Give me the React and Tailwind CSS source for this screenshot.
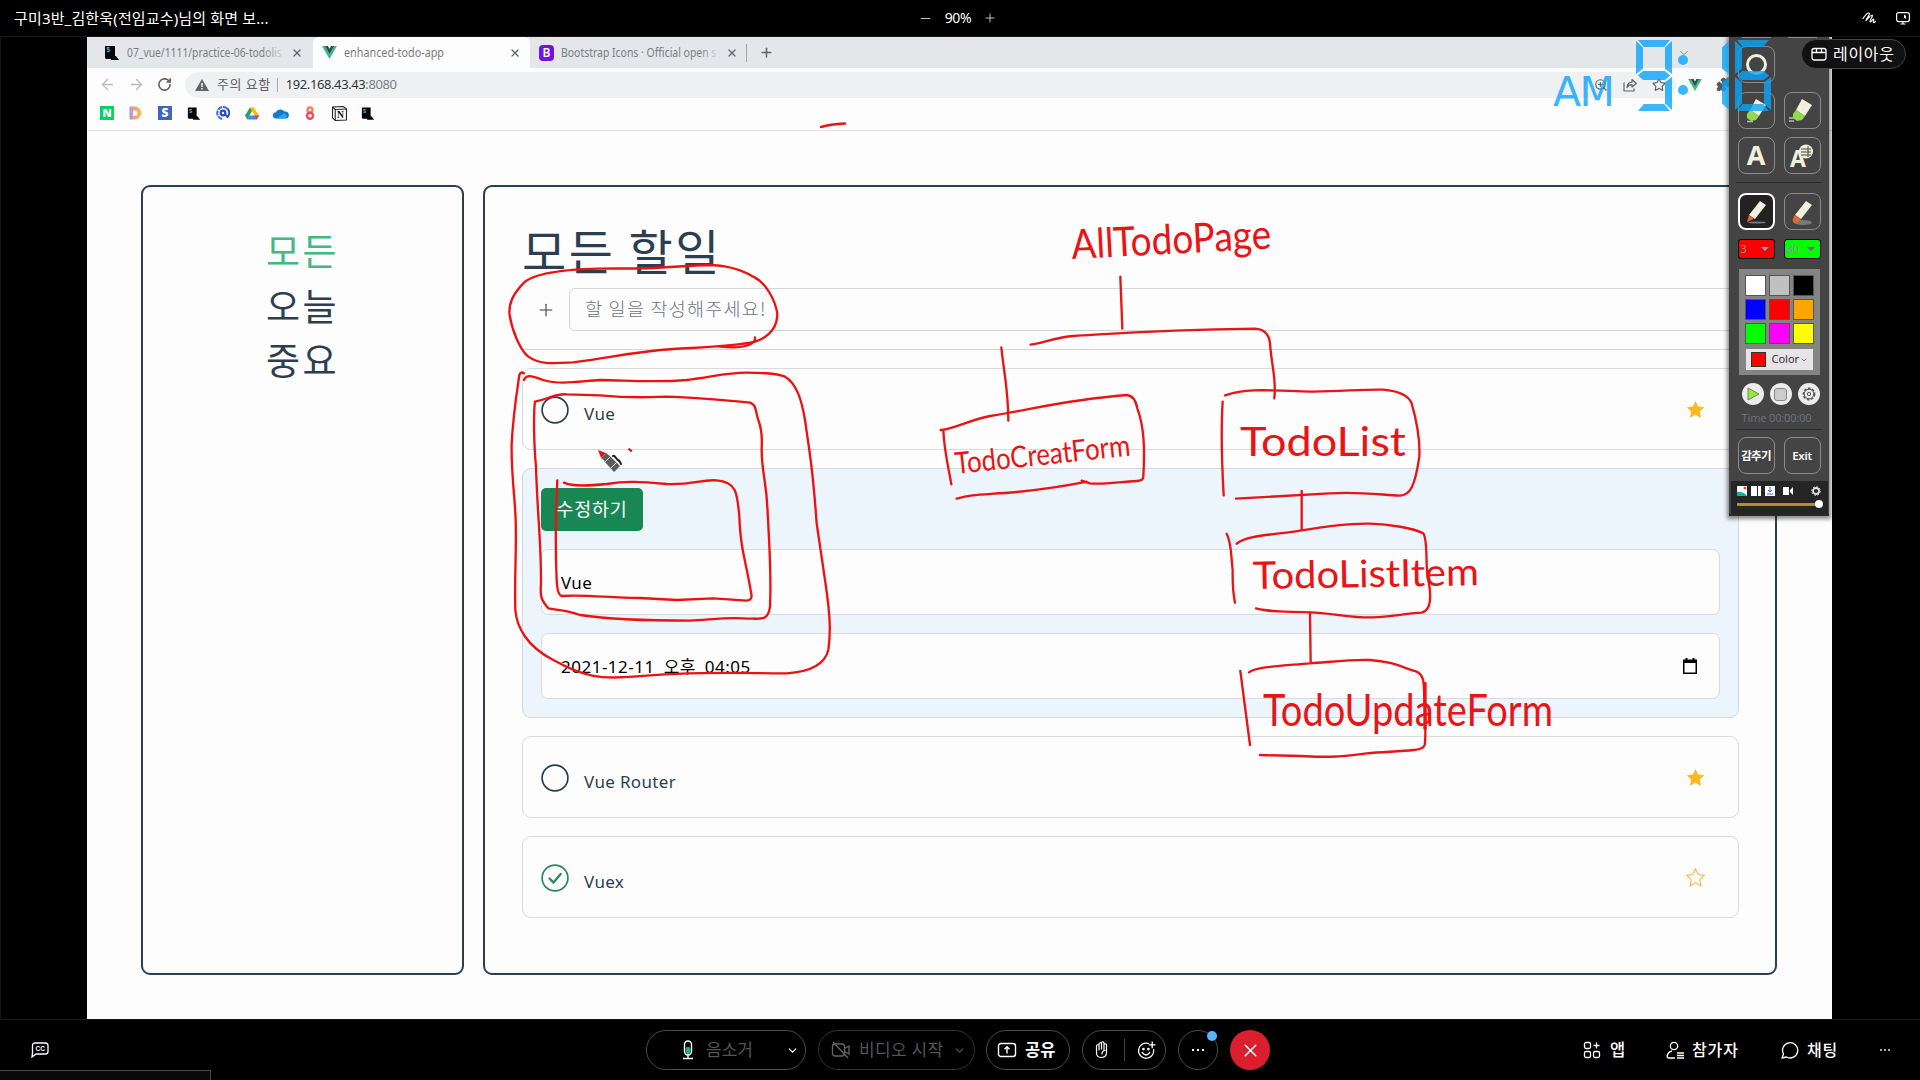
import React from "react";
import {
  ArrowLeft, ArrowRight, RotateCw, X, Plus, Minus, ChevronDown, Star, ZoomIn, Puzzle,
} from "lucide-react";

const KR = "font-['Noto_Sans','Noto_Sans_CJK_KR',sans-serif]";

function VueLogo({ className }) {
  return (
    <svg viewBox="0 0 24 21" className={className}>
      <path d="M0 0h9.2L12 4.8 14.8 0H24L12 20.8z" fill="#41b883" />
      <path d="M4.8 0h4.4L12 4.8 14.8 0h4.4L12 12.4z" fill="#34495e" />
    </svg>
  );
}

function Terminal({ className }) {
  return (
    <svg viewBox="0 0 16 16" className={className}>
      <path d="M1 1h10v10h1l3 4H7v-1H2l-1-1z" fill="#050505" />
      <text x="2.4" y="7.4" fontSize="6.5" fontWeight="700" fill="#4fb3c8" fontFamily="Liberation Sans">$</text>
    </svg>
  );
}

function TopBar() {
  return (
    <header className="flex h-9 items-center bg-black text-white">
      <div className="w-[911px] pl-[14px] text-[15px] leading-none tracking-[0.15px]">구미3반_김한욱(전임교수)님의 화면 보...</div>
      <div className="flex flex-1 items-center">
        <div className="flex w-[100px] items-center justify-between pl-[7px] pr-[14px]">
          <Minus size={15} strokeWidth={1.5} className="text-gray-300" />
          <span className="text-[14px] leading-none tracking-[-0.4px]">90%</span>
          <Plus size={14} strokeWidth={1.5} className="text-gray-300" />
        </div>
      </div>
      <div className="flex items-center gap-[18px] pr-[9px]">
        <svg viewBox="0 0 16 14" className="h-[14px] w-4" fill="none" stroke="#fff" strokeWidth="1.2" strokeLinecap="round" strokeLinejoin="round">
          <path d="M2 7.500C4 4.500 7 1.500 8.200 2.200S5.500 7.500 5 9.500C7 7.500 10 3.500 11.200 4.300S8.500 9 9 10.500 11.500 8 12.500 8.200 11.500 11 12.500 11.500 13.800 11 14.300 10.500" />
        </svg>
        <svg viewBox="0 0 16 14" className="h-[14px] w-4" fill="none" stroke="#fff" strokeWidth="1.2">
          <rect x="1.600" y="1.600" width="12.800" height="9" rx="2" />
          <path d="M5.500 13h5M8 11v2" />
          <path d="M9 3.500 11 5v3L9 6.500z" fill="#fff" stroke="none" />
        </svg>
      </div>
    </header>
  );
}

function Tabs() {
  return (
    <div className="flex h-[31px] items-center bg-[#e5e6ea] text-[12px] text-[#7a7c80]">
      <div className="flex w-[226px] items-center pl-[17px]">
        <Terminal className="h-4 w-4" />
        <div className="relative ml-[7px] w-[160px] whitespace-nowrap">
          <span className="inline-block origin-left scale-x-[0.86]">07_vue/1111/practice-06-todolis</span>
          <div className="absolute inset-y-0 right-0 w-6 bg-gradient-to-r from-transparent to-[#e5e6ea]" />
        </div>
        <X size={12} strokeWidth={2.6} className="ml-[4px] text-[#5f6368]" />
      </div>
      <div className="flex h-full w-[217px] items-center rounded-t-md bg-[#fdfdfd] pl-[9px]">
        <VueLogo className="h-[13px] w-[15px]" />
        <div className="ml-[7px] w-[164px]"><span className="inline-block origin-left scale-x-[0.9]">enhanced-todo-app</span></div>
        <X size={12} strokeWidth={2.6} className="ml-[1px] text-[#5f6368]" />
      </div>
      <div className="flex w-[217px] items-center border-r border-[#a0a2a6] pl-[9px]">
        <div className="flex h-4 w-[15px] items-center justify-center rounded-sm bg-[#7012e8] text-[12px] font-semibold text-white">B</div>
        <div className="relative ml-[7px] w-[159px] whitespace-nowrap">
          <span className="inline-block origin-left scale-x-[0.87]">Bootstrap Icons · Official open s</span>
          <div className="absolute inset-y-0 right-0 w-5 bg-gradient-to-r from-transparent to-[#e5e6ea]" />
        </div>
        <X size={12} strokeWidth={2.6} className="ml-[6px] text-[#5f6368]" />
      </div>
      <Plus size={15} strokeWidth={2.4} className="ml-[12px] text-[#5f6368]" />
      <ChevronDown size={14} strokeWidth={1.5} className="ml-[903px] text-[#777]" />
    </div>
  );
}

function AddressBar() {
  return (
    <div className="flex h-[33px] items-center pl-[12px] text-[#5f6368]">
      <ArrowLeft size={17} strokeWidth={1.8} className="text-[#b8babd]" />
      <ArrowRight size={17} strokeWidth={1.8} className="ml-[12px] text-[#b8babd]" />
      <RotateCw size={15} strokeWidth={2.6} className="ml-[12px]" />
      <div className="ml-[13px] flex h-[26px] w-[1491px] items-center rounded-full bg-[#eff0f2] pl-[10px]">
        <svg viewBox="0 0 14 12" className="h-[12px] w-[14px]">
          <path d="M7 0l7 12H0z" fill="#5f6368" /><path d="M6.300 4h1.400v4H6.300zM6.300 9h1.400v1.400H6.300z" fill="#fff" />
        </svg>
        <span className="ml-[8px] text-[13px] leading-none tracking-[0.5px]">주의 요함</span>
        <div className="ml-[6px] h-[14px] w-px bg-[#a5a7aa]" />
        <span className="ml-[8px] text-[13px] leading-none tracking-[-0.4px] text-[#333639]">192.168.43.43<span className="text-[#7b7d80]">:8080</span></span>
        <div className="ml-auto flex items-center gap-[15px] pr-[10px]">
          <ZoomIn size={14} />
          <svg viewBox="0 0 14 14" className="h-[14px] w-[14px]" fill="none" stroke="currentColor" strokeWidth="1.200" strokeLinejoin="round">
            <path d="M1 4.500V13h10v-2.500M4 9.500C4.300 6.500 6 4.300 9 4.200V1.500L13.300 5.500 9 9V6.700C6.800 6.700 5.200 7.500 4 9.500z" />
          </svg>
          <Star size={14} />
        </div>
      </div>
      <VueLogo className="ml-[12px] h-[12px] w-[14px]" />
      <Puzzle size={15} fill="#555" className="ml-[14px]" />
    </div>
  );
}

function Bookmarks() {
  return (
    <div className="flex h-[30px] items-center gap-[15px] border-b border-[#dfe0e2] pb-[5px] pl-[13px]">
      <div className="flex h-[14px] w-[14px] items-center justify-center bg-[#04d45f] text-[11px] font-black text-white">N</div>
      <svg viewBox="0 0 14 14" className="-ml-px h-[14px] w-[14px]">
        <defs><linearGradient id="dg"><stop offset="0" stopColor="#a69ae0" /><stop offset=".5" stopColor="#f0a486" /><stop offset="1" stopColor="#f5c63c" /></linearGradient></defs>
        <path d="M1.500 .500H7a6.300 6.300 0 0 1 0 13H1.500zM5 4.500v5.500h1.500a2.700 2.700 0 0 0 0-5.500z" fill="url(#dg)" fillRule="evenodd" />
      </svg>
      <div className="ml-px flex h-[14px] w-[14px] items-center justify-center bg-[#3f66b8] text-[12px] font-black text-white">S</div>
      <Terminal className="h-[15px] w-[14px]" />
      <svg viewBox="0 0 14 14" className="h-[14px] w-[14px]" fill="none" strokeWidth="2">
        <path d="M11.500 2.800A6 6 0 1 0 7 13" stroke="#3c6ae0" strokeDasharray="5 .8" /><circle cx="7" cy="7" r="2.300" stroke="#2b46d8" strokeWidth="2.200" /><path d="M11.500 2.800A6 6 0 0 1 11.500 11L9.500 8.500" stroke="#2b46d8" />
      </svg>
      <svg viewBox="0 0 14 13" className="h-[13px] w-[14px]">
        <path d="M5 .500h4l5 8h-4.500z" fill="#fbbc05" /><path d="M5 .500 0 8.500 2.200 12.500 7 4z" fill="#1fa463" /><path d="M4.500 8.500H14L11.800 12.500H2.200z" fill="#4285f4" /><path d="M9.500 8.500H14l-2.200 4z" fill="#ea4335" />
      </svg>
      <svg viewBox="0 0 16 11" className="-mx-px h-[11px] w-4">
        <path d="M3 10.500A3 3 0 0 1 3 4.300 5 5 0 0 1 11.600 3.600 3.400 3.400 0 0 1 13 10.500z" fill="#1279ce" /><path d="M3 10.500 11 5.500A3 3 0 0 1 13 10.500z" fill="#29a5ea" />
      </svg>
      <svg viewBox="0 0 14 14" className="h-[14px] w-[14px]" fill="none" strokeWidth="2.400">
        <circle cx="7" cy="4" r="2.500" stroke="#fa8064" /><circle cx="7" cy="9.700" r="3" stroke="#f4485c" />
      </svg>
      <svg viewBox="0 0 14 14" className="h-[15px] w-[15px]">
        <path d="M.500 1 10.500.500 13.500 2.500V13L3 13.500.500 11z" fill="#fff" stroke="#222" /><path d="M.500 1 3 3.200 13.500 2.800M3 3.200v10" stroke="#222" fill="none" />
        <text x="4.600" y="11.600" fontSize="9" fontWeight="700" fontFamily="Liberation Serif" fill="#111">N</text>
      </svg>
      <Terminal className="-ml-px h-[15px] w-[14px]" />
    </div>
  );
}

function TodoItem({ title, checked, starred, className }) {
  return (
    <div className={`flex h-[82px] items-center rounded-[9px] border border-[#d8dadd] bg-[#fdfdfd] pl-[18px] pr-[33px] ${className}`}>
      <svg viewBox="0 0 28 28" className="mt-px h-7 w-7" fill="none">
        <circle cx="14" cy="14" r="12.900" stroke={checked ? "#2b8a5c" : "#2c3e50"} strokeWidth="1.700" />
        {checked && <path d="M8.500 14.500l4 4 7.200-8.500" stroke="#2b8a5c" strokeWidth="2.300" strokeLinecap="round" />}
      </svg>
      <span className="ml-[15px] pt-[9px] text-[17px] tracking-[0.35px] text-[#2c3e50]">{title}</span>
      <svg viewBox="0 0 16 16" className="ml-auto mt-px h-[19px] w-[19px]" fill={starred ? "#fbb91f" : "none"} stroke={starred ? "none" : "#f7bb4c"}>
        <path d="M8 .8l2.250 4.700 5.150.7-3.750 3.600.9 5.200L8 12.500 3.450 15l.9-5.200L.6 6.200l5.150-.7z" strokeWidth="1" />
      </svg>
    </div>
  );
}

function TodoApp() {
  return (
    <main className="flex h-[888px] gap-[19px] bg-[#fdfdfd] pl-[54px] pt-[54px] text-[#2c3e50]">
      <nav className="flex h-[790px] w-[323px] flex-col items-center rounded-[9px] border-2 border-[#2c3e50] pt-[36px] text-[37px] leading-[54.500px] font-['Noto_Sans_CJK_KR',sans-serif] font-normal tracking-[2.500px]">
        <span className="text-[#42b983]">모든</span>
        <span>오늘</span>
        <span>중요</span>
      </nav>
      <section className="h-[790px] w-[1294px] rounded-[9px] border-2 border-[#2c3e50] pl-[37px] pr-[36px]">
        <h1 className="mt-[31px] h-[65px] font-['Noto_Sans_CJK_KR',sans-serif] text-[48px] font-normal leading-[62px] tracking-[2.500px]">모든 할일</h1>
        <form className="flex h-[67px] items-start border-b border-[#d3d6d9] pl-[13px] pt-[5px]">
          <div className="flex h-[43px] w-[34px] items-center pl-px"><Plus size={20} strokeWidth={1.3} /></div>
          <div className="flex h-[43px] flex-1 items-center rounded-md border border-[#d3d6d9] pb-[2px] pl-[15px] font-['Noto_Sans_CJK_KR',sans-serif] text-[18.500px] font-light tracking-[1.250px] text-[#6c757d]">할 일을 작성해주세요!</div>
        </form>
        <TodoItem title="Vue" starred className="mt-[18px]" />
        <div className="mt-[18px] h-[250px] rounded-[9px] border border-[#d3d6da] bg-[#ecf4fc] px-[18px] pt-[19px] text-[18px] text-black">
          <div className="flex h-[43px] w-[102px] items-center justify-center rounded-[5px] bg-[#198754] pb-px text-[18.500px] tracking-[0.800px] text-white">수정하기</div>
          <div className="mt-[18px] flex h-[66px] items-center rounded-[7px] border border-[#d8dbdf] bg-[#fdfdfd] pl-[19px] pt-px text-[17px] tracking-[0.300px]">Vue</div>
          <div className="mt-[18px] flex h-[66px] items-center justify-between rounded-[7px] border border-[#d8dbdf] bg-[#fdfdfd] pl-[19px] pr-[21px] text-[17px]">
            <span className="pt-px tracking-[0.500px] [word-spacing:4px]">2021-12-11 오후 04:05</span>
            <svg viewBox="0 0 16 16" className="h-4 w-4"><path d="M3.500 0h2v1.500h5V0h2v1.500H15V16H1V1.500h2.500zM2.500 5v9.500h11V5z" fillRule="evenodd" /></svg>
          </div>
        </div>
        <TodoItem title="Vue Router" starred className="mt-[18px]" />
        <TodoItem title="Vuex" checked className="mt-[18px]" />
      </section>
    </main>
  );
}

function Ink() {
  return (
    <svg viewBox="0 0 1920 1080" className="pointer-events-none absolute left-0 top-0 h-[1080px] w-[1920px]" fill="none" stroke="#e81416" strokeLinecap="round" strokeLinejoin="round">
      <path d="M821 127C828 125 837 124 845 123.500" strokeWidth="2.400" />
      <g transform="translate(500 180) scale(.33333)" strokeWidth="7" stroke="#ee1111">
        <path d="M765 472C768 494 730 508 660 500M765 485C810 470 832 440 832 400C825 360 800 310 760 290C700 255 640 255 610 255C500 262 430 268 350 265C250 265 120 270 75 305C35 345 28 370 28 400C35 450 60 510 85 530C120 555 160 550 220 547C350 530 400 515 520 507C600 502 700 500 765 485" />
        <path d="M72 600C80 580 100 590 130 600C180 615 230 605 300 600C400 602 470 608 560 600C640 590 680 578 740 578C800 578 830 580 855 590C890 610 905 660 915 720L928 810C938 880 945 960 950 1030L975 1200C995 1330 990 1370 985 1410C975 1450 940 1475 860 1480C800 1482 600 1470 400 1490C300 1498 250 1490 160 1440C80 1400 50 1340 46 1290C43 1200 50 1100 47 1020C45 950 33 880 35 790C40 700 50 640 58 585Q63 573 72 580" />
        <path d="M105 665C150 655 170 640 200 643L300 646C400 655 430 652 500 650C580 652 650 658 750 668C770 675 765 690 775 720C790 760 785 790 785 810C785 880 800 900 803 1000C806 1060 815 1180 810 1280C805 1325 780 1315 740 1316C700 1310 640 1318 570 1322C450 1322 340 1320 240 1305C200 1290 170 1290 145 1285C115 1250 123 1240 123 1200C123 1080 112 1000 108 860C102 800 100 700 105 665" />
        <path transform="translate(0 780)" d="M172 121C168 200 166 330 170 420Q172 465 185 468C250 462 340 475 420 474L530 480L640 475L740 482Q758 480 754 462C735 350 722 330 718 230C712 160 710 125 650 121C600 118 580 135 500 132C420 125 380 122 320 132C280 136 220 142 192 128M388 28L393 32" />
      </g>
      <g transform="translate(930 200) scale(.33333)" strokeWidth="7">
        <path d="M571 230L577 386M302 434C340 430 380 410 430 408C600 398 700 390 975 386Q1015 388 1020 430C1025 500 1040 540 1033 595M214 442C222 520 235 570 235 662" />
        <path d="M32 690C60 690 120 660 180 648C300 630 400 600 590 585Q615 587 622 625C642 680 645 740 640 830Q640 842 620 843C570 845 520 855 480 850L455 842M470 845C400 860 300 872 260 876C150 885 130 882 80 896M40 690C42 750 55 800 64 853" />
        <path d="M885 586C950 565 1000 570 1150 575C1250 573 1300 568 1360 569Q1430 575 1445 610C1465 680 1470 730 1468 770C1455 860 1440 885 1410 887C1330 882 1280 875 1200 880C1100 885 1000 892 918 896M878 605C872 700 875 780 881 886" />
      </g>
      <g transform="translate(1200 480) scale(.33333)" strokeWidth="7">
        <path d="M305 33V150M110 191C140 165 220 165 300 152C400 135 470 130 510 131C570 132 640 145 670 160C685 180 675 270 685 300C695 350 695 390 665 398C600 402 550 415 490 412C420 410 390 398 330 397C250 395 200 395 168 385M80 161C95 190 92 220 98 270Q97 330 105 368" />
        <path d="M330 397L332 549M147 577C170 560 240 558 330 550C400 545 460 538 510 540C580 545 600 560 650 575C680 590 668 620 676 700C675 740 678 770 674 795Q670 808 640 810C600 815 550 815 500 820C400 835 350 830 300 828L180 825M121 573L150 795" />
        <path d="M675 610V745" strokeWidth="10" />
      </g>
      <g fill="#e81416" stroke="none" fontFamily="Lato, sans-serif" fontWeight="400">
        <text x="1072" y="259" fontSize="41" textLength="200" lengthAdjust="spacingAndGlyphs" transform="rotate(-3 1072 259)">AllTodoPage</text>
        <text x="956" y="474" fontSize="30" textLength="176" lengthAdjust="spacingAndGlyphs" transform="rotate(-6 956 474)">TodoCreatForm</text>
        <text x="1240" y="456" fontSize="40" textLength="166" lengthAdjust="spacingAndGlyphs">TodoList</text>
        <text x="1253" y="589" fontSize="38" textLength="226" lengthAdjust="spacingAndGlyphs" transform="rotate(-1 1253 589)">TodoListItem</text>
        <text x="1263" y="726" fontSize="44" textLength="290" lengthAdjust="spacingAndGlyphs">TodoUpdateForm</text>
      </g>
      <g transform="translate(598 450)" stroke="none">
        <path d="M0 0 8 3 3 8z" fill="#e31517" />
        <path d="M8 3 12 6 7 11 3 8zM12 6 22 16 16 22 6 11z" fill="#5c5c5c" />
        <path d="M12 7 7 12M18 13 13 18" stroke="#fff" />
        <path d="M15 6C17 5 18 9 20 10S22 12 23 14" stroke="#222" strokeWidth="2" fill="none" />
      </g>
    </svg>
  );
}

function ToolButton({ active, children, className = "" }) {
  return (
    <div className={`flex h-[37px] w-[37px] items-center justify-center rounded-[8px] border ${active ? "border-2 border-white bg-[#222]" : "border-[#8b8b8b]"} ${className}`}>{children}</div>
  );
}

function Highlighter({ lines }) {
  return (
    <svg viewBox="0 0 28 28" className="h-7 w-7">
      <path d="M14 3 24 9 17 20 8 14z" fill="#f2f0dc" /><path d="M8 14 17 20 14 24 9 25 5 22 5 18z" fill="#93d94c" />
      <path d={lines ? "M1 22h5M1 25h5" : "M5 25.500h6"} stroke="#bbb" strokeWidth="1.500" />
    </svg>
  );
}

function Pencil({ wide }) {
  return (
    <svg viewBox="0 0 28 28" className="h-7 w-7">
      <ellipse cx="15" cy="24.500" rx="9" ry={wide ? 2.500 : 1} fill="#777" />
      <path d="M18 3 24 7 13 21 7 17z" fill="#f2f0dc" />
      <path d={wide ? "M7 17 13 21Q11 25 6 25 3 22 7 17z" : "M7 17 12 21 5 24z"} fill="#dc6b38" />
    </svg>
  );
}

function PenToolbox() {
  return (
    <aside className="absolute left-[1729px] top-[37px] flex h-[479px] w-[100px] flex-col items-center border-b-2 border-[#2a2a2a] bg-[#444] font-['Noto_Sans','Noto_Sans_CJK_KR',sans-serif] shadow-[0_1px_4px_2px_rgba(0,0,0,0.45)]">
      <div className="flex gap-[17px]">
        <div className="h-px w-[29px] bg-[#8b8b8b]" />
        <div className="h-px w-[29px] bg-[#8b8b8b]" />
      </div>
      <div className="mt-[8px] grid grid-cols-2 gap-x-[9px] gap-y-[8.500px]">
        <ToolButton><div className="h-[21px] w-[21px] rounded-full border-[3px] border-[#f2f0dc]" /></ToolButton>
        <div />
        <ToolButton><Highlighter /></ToolButton>
        <ToolButton><Highlighter lines /></ToolButton>
        <ToolButton><span className="text-[27px] font-bold text-[#f2f0dc]">A</span></ToolButton>
        <ToolButton>
          <svg viewBox="0 0 28 28" className="h-7 w-7">
            <text x="2" y="25" fontSize="23" fontWeight="700" fill="#f2f0dc" fontFamily="Noto Sans">A</text>
            <circle cx="18" cy="9.500" r="7" fill="#f2f0dc" />
            <path d="M13 7h10M13 10h10M13 13h10M20 4v11" stroke="#444" />
          </svg>
        </ToolButton>
      </div>
      <div className="mt-[8px] h-px w-[86px] bg-[#2b2b2b]" />
      <div className="mt-[10px] flex gap-[9px]">
        <ToolButton active><Pencil /></ToolButton>
        <ToolButton><Pencil wide /></ToolButton>
      </div>
      <div className="mt-[9px] flex gap-[9px] text-[11px] text-[#9b8f8f]">
        <div className="flex h-[20px] w-[37px] items-center justify-between rounded-[3px] border border-black bg-[#f00] pl-[2px] pr-[5px]">3<div className="border-x-4 border-t-4 border-x-transparent border-t-[#5ab8c8]" /></div>
        <div className="flex h-[20px] w-[37px] items-center justify-between rounded-[3px] border border-black bg-[#0f0] pl-[2px] pr-[5px]">30<div className="border-x-4 border-t-4 border-x-transparent border-t-[#a63fb8]" /></div>
      </div>
      <div className="mt-[10px] flex h-[106px] w-[81px] shrink-0 flex-col items-center bg-[#848484] pt-[6px]">
        <div className="grid grid-cols-3 gap-[3px]">
          <div className="h-[21px] w-[21px] border border-[#555] bg-white" />
          <div className="h-[21px] w-[21px] border border-[#555] bg-[#c0c0c0]" />
          <div className="h-[21px] w-[21px] border border-[#555] bg-black" />
          <div className="h-[21px] w-[21px] border border-[#555] bg-[#00f]" />
          <div className="h-[21px] w-[21px] border border-[#555] bg-[#f00]" />
          <div className="h-[21px] w-[21px] border border-[#555] bg-[#ffa500]" />
          <div className="h-[21px] w-[21px] border border-[#555] bg-[#0f0]" />
          <div className="h-[21px] w-[21px] border border-[#555] bg-[#f0f]" />
          <div className="h-[21px] w-[21px] border border-[#555] bg-[#ff0]" />
        </div>
        <div className="mt-[5px] flex h-[21px] w-[67px] items-center bg-[#e6e4e6] pl-[5px] text-[11px] text-[#333]">
          <div className="mr-[6px] h-[15px] w-[15px] border border-[#333] bg-[#f00]" />Color<ChevronDown size={8} className="ml-[1px]" />
        </div>
      </div>
      <div className="mt-[8px] flex gap-[6px] pl-[3px]">
        <div className="flex h-[22px] w-[22px] items-center justify-center rounded-full bg-[#ececec]"><svg viewBox="0 0 14 14" className="h-[14px] w-[14px]"><path d="M2 1 13 7 2 13z" fill="#98e645" stroke="#6b8b50" /></svg></div>
        <div className="flex h-[22px] w-[22px] items-center justify-center rounded-full bg-[#ececec]"><div className="h-[13px] w-[13px] rounded-[3px] border border-[#888] bg-[#ccc]" /></div>
        <div className="flex h-[22px] w-[22px] items-center justify-center rounded-full bg-[#ececec]"><svg viewBox="0 0 14 14" className="h-[14px] w-[14px]" fill="none" stroke="#555"><circle cx="7" cy="7" r="5.600" strokeWidth="1.600" strokeDasharray="2.600 1.500" /><circle cx="7" cy="7" r="4.800" /><circle cx="7" cy="7" r="1.700" /></svg></div>
      </div>
      <div className="mt-[4px] pr-[5px] text-[11px] leading-[17px] tracking-[-0.150px] text-[#68727c]">Time 00:00:00</div>
      <div className="mt-[3px] h-px w-[86px] bg-[#2b2b2b]" />
      <div className="mt-[7px] flex gap-[9px] text-[11.500px] font-semibold text-white">
        <ToolButton className="tracking-[-0.700px]">감추기</ToolButton><ToolButton className="tracking-[-0.300px]">Exit</ToolButton>
      </div>
      <div className="mt-auto flex h-[33px] w-[97px] flex-col bg-[#252525] px-[6px] pt-[5px]">
        <div className="flex items-center gap-[3px]">
          <svg viewBox="0 0 10 10" className="h-[10px] w-[10px]"><path d="M0 0h10v10H0z" fill="#fff" /><path d="M0 6Q6 5 10 10H0z" fill="#19b09a" /><circle cx="8" cy="2" r="1.500" fill="#e84b30" /></svg>
          <svg viewBox="0 0 10 10" className="ml-[1px] h-[10px] w-[10px]"><path d="M0 0h6v10H0zM7 0h3v10H7z" fill="#fff" /></svg>
          <svg viewBox="0 0 10 10" className="ml-[1px] h-[10px] w-[10px]"><path d="M0 0h10v10H0z" fill="#fff" /><path d="M5 1v5M3 4l2 2 2-2M2 8h6" stroke="#3268d8" fill="none" /></svg>
          <svg viewBox="0 0 10 8" className="ml-[5px] h-[8px] w-[10px]"><path d="M0 0h6v8H0zM7 3l3-3v8L7 5z" fill="#fff" /></svg>
          <svg viewBox="0 0 10 10" className="ml-auto mr-[1px] h-[10px] w-[10px]" fill="none" stroke="#ddd"><circle cx="5" cy="5" r="3" strokeWidth="1.800" /><circle cx="5" cy="5" r="4.300" strokeDasharray="1.800 1.500" /></svg>
        </div>
        <div className="mt-[4px] flex items-center"><div className="h-[3px] flex-1 border-b border-[#7fa03c] bg-[#c08a2a]" /><div className="-mr-px h-[8px] w-[8px] rounded-full bg-white" /></div>
      </div>
    </aside>
  );
}

const SEGMENTS = {
  top: "left-[2px] top-0 h-[7px] w-[32px] [clip-path:polygon(0_0,100%_0,82%_100%,18%_100%)]",
  upperLeft: "left-0 top-[1px] h-[33px] w-[7px] [clip-path:polygon(0_0,100%_20%,100%_84%,0_100%)]",
  upperRight: "left-[29px] top-[1px] h-[33px] w-[7px] [clip-path:polygon(100%_0,0_20%,0_84%,100%_100%)]",
  middle: "left-[2px] top-[31px] h-[9px] w-[32px] [clip-path:polygon(0_50%,16%_0,84%_0,100%_50%,84%_100%,16%_100%)]",
  lowerLeft: "left-0 top-[37px] h-[33px] w-[7px] [clip-path:polygon(0_0,100%_16%,100%_80%,0_100%)]",
  lowerRight: "left-[29px] top-[37px] h-[33px] w-[7px] [clip-path:polygon(100%_0,0_16%,0_80%,100%_100%)]",
  bottom: "left-[2px] top-[64px] h-[7px] w-[32px] [clip-path:polygon(18%_0,82%_0,100%_100%,0_100%)]",
};

function Digit({ on, className = "" }) {
  return (
    <div className={`relative h-[71px] w-[36px] ${className}`}>
      {on.map((name) => <div key={name} className={`absolute bg-[#0aa5fb] ${SEGMENTS[name]}`} />)}
    </div>
  );
}

function Clock() {
  return (
    <div className="absolute left-[1553px] top-[40px] flex h-[71px] items-start opacity-80">
      <span className="mt-[26px] w-[83px] text-[41px] leading-[52px] text-[#0aa5fb] font-['DejaVu_Sans',sans-serif] font-normal tracking-[-1.500px]">AM</span>
      <Digit on={["top", "upperLeft", "upperRight", "middle", "lowerRight", "bottom"]} />
      <div className="ml-[6px] mt-[15px] flex flex-col gap-[20px]">
        <div className="h-[10px] w-[10px] rounded-full bg-[#0aa5fb]" /><div className="h-[10px] w-[10px] rounded-full bg-[#0aa5fb]" />
      </div>
      <Digit on={["upperRight", "lowerRight"]} className="ml-[5px]" />
      <Digit on={["top", "upperLeft", "middle", "lowerLeft", "lowerRight", "bottom"]} className="ml-[6px]" />
    </div>
  );
}

const pill = "flex h-10 items-center rounded-full border border-[#4a4a4a]";

function BottomBar() {
  return (
    <footer className="relative flex h-[61px] items-center border-t border-[#161616] bg-black text-[16px] text-white">
      <div className="w-[646px] pl-[31px]">
        <svg viewBox="0 0 18 16" className="h-4 w-[18px]">
          <path d="M3.500 1h11A2.500 2.500 0 0 1 17 3.500v6a2.500 2.500 0 0 1-2.500 2.500H5l-4 3 .5-4V3.500A2.500 2.500 0 0 1 3.500 1z" fill="none" stroke="#fff" strokeWidth="1.300" />
          <text x="9.200" y="9" fontSize="6.500" fill="#fff" textAnchor="middle" fontWeight="700" fontFamily="Liberation Sans">CC</text>
        </svg>
      </div>
      <div className={`${pill} w-[160px] pl-[35px] text-[#555]`}>
        <svg viewBox="0 0 12 20" className="h-5 w-3" fill="none" stroke="#fff" strokeWidth="1.400">
          <rect x="2.500" y="1" width="7" height="14" rx="3.500" /><rect x="3.500" y="7" width="5" height="7" rx="2" fill="#2ea58a" stroke="none" /><path d="M6 15v3M1 18.500h10" />
        </svg>
        <span className="ml-[12px] w-[80px] text-[17px]">음소거</span>
        <ChevronDown size={13} className="text-white" />
      </div>
      <div className={`${pill} ml-[12px] w-[157px] border-[#333] pl-[12px] text-[#555]`}>
        <svg viewBox="0 0 20 18" className="h-[18px] w-5" fill="none" stroke="#666" strokeWidth="1.300"><rect x="1.500" y="3" width="12" height="12" rx="2.500" /><path d="M13.500 7.500 18 5v8l-4.500-2.500M2 1l15 16" /></svg>
        <span className="ml-[8px] w-[94px] whitespace-nowrap text-[17px] tracking-[0.300px]">비디오 시작</span>
        <ChevronDown size={13} />
      </div>
      <div className={`${pill} ml-[11px] w-[84px] pl-[10px] font-semibold`}>
        <svg viewBox="0 0 20 16" className="h-4 w-5" fill="none" stroke="#fff" strokeWidth="1.400"><rect x="1.500" y="1.500" width="17" height="13" rx="2.500" /><path d="M10 11.500V5M7.500 7.300 10 4.800l2.500 2.500" /></svg>
        <span className="ml-[8px] text-[16.500px]">공유</span>
      </div>
      <div className={`${pill} ml-[12px] w-[84px] pl-[12px]`}>
        <svg viewBox="0 0 14 18" className="h-[18px] w-[14px]" fill="none" stroke="#fff" strokeWidth="1.200" strokeLinejoin="round" strokeLinecap="round">
          <path d="M1.500 12V5a1.200 1.200 0 0 1 2.500 0v4-6a1.200 1.200 0 0 1 2.500 0v5-6a1.200 1.200 0 0 1 2.500 0v7-5a1.200 1.200 0 0 1 2.500 0v7c0 4-2 5.500-5 5.500s-5-2-5-4.500M7 13c0-2 1-3.500 3-3.500" />
        </svg>
        <div className="ml-[15px] h-[22px] w-px bg-[#444]" />
        <svg viewBox="0 0 20 20" className="ml-[12px] h-[19px] w-[19px]" fill="none" stroke="#fff" strokeWidth="1.400" strokeLinecap="round">
          <path d="M12 2.600A8 8 0 1 0 17.500 9M16 1v6M13 4h6M5.500 12q4 5.500 8 0" /><circle cx="6.800" cy="8.500" r=".7" fill="#fff" /><circle cx="12" cy="8.500" r=".7" fill="#fff" />
        </svg>
      </div>
      <div className={`${pill} relative ml-[12px] w-10 justify-center gap-[3px]`}>
        <div className="h-[2px] w-[2px] bg-white" /><div className="h-[2px] w-[2px] bg-white" /><div className="h-[2px] w-[2px] bg-white" />
        <div className="absolute right-0 top-0 h-[10px] w-[10px] rounded-full bg-[#5eb1fb]" />
      </div>
      <div className="ml-[12px] flex h-10 w-10 items-center justify-center rounded-full bg-[#db1f2f]"><X size={21} strokeWidth={1.600} /></div>
      <div className="ml-[313px] flex items-center font-medium">
        <svg viewBox="0 0 18 18" className="h-[18px] w-[18px]" fill="none" stroke="#fff" strokeWidth="1.300"><rect x="1.500" y="1.500" width="6" height="6" rx="1.500" /><rect x="1.500" y="10.500" width="6" height="6" rx="1.500" /><rect x="10.500" y="10.500" width="6" height="6" rx="1.500" /><path d="M13.500 1.500v6M10.500 4.500h6" /></svg>
        <span className="ml-[9px] w-[56px] text-[16.500px]">앱</span>
        <svg viewBox="0 0 18 18" className="h-[18px] w-[18px]" fill="none" stroke="#fff" strokeWidth="1.300"><circle cx="8" cy="5" r="3.700" /><path d="M9 17H3q-2 0-1.800-2Q2 11 6 10M11 12h7M11 14.500h7M11 17h7" /></svg>
        <span className="ml-[8px] w-[89px] tracking-[0.900px]">참가자</span>
        <svg viewBox="0 0 18 18" className="h-[18px] w-[18px]" fill="none" stroke="#fff" strokeWidth="1.300"><path d="M1 17l1.500-4A7.600 7.600 0 1 1 5.500 16z" strokeLinejoin="round" /></svg>
        <span className="ml-[8px] w-[73px] tracking-[0.900px]">채팅</span>
        <div className="flex gap-[2px]"><div className="h-[2px] w-[2px] bg-[#aaa]" /><div className="h-[2px] w-[2px] bg-[#aaa]" /><div className="h-[2px] w-[2px] bg-[#aaa]" /></div>
      </div>
      <div className="absolute bottom-0 left-0 h-[10px] w-[211px] border-r border-t border-[#484848] bg-[#0a0a0a]" />
    </footer>
  );
}

export default function App() {
  return (
    <div className={`relative h-[1080px] w-[1920px] overflow-hidden bg-black ${KR}`}>
      <TopBar />
      <div className="h-[983px] border-l border-t border-[#161616] pl-[86px]">
        <div className="h-[982px] w-[1745px] overflow-hidden bg-[#fdfdfd]">
          <Tabs />
          <AddressBar />
          <Bookmarks />
          <TodoApp />
        </div>
      </div>
      <BottomBar />
      <PenToolbox />
      <Clock />
      <Ink />
      <div className="absolute left-[1801px] top-[39px] flex h-[30px] w-[105px] items-center rounded-full border border-[#444] bg-[#111] pl-[9px] text-[16px] text-white">
        <svg viewBox="0 0 16 14" className="h-[14px] w-4" fill="none" stroke="#fff" strokeWidth="1.300"><rect x="1" y="1.500" width="14" height="11.500" rx="2.200" /><path d="M1 5.500h14M5.500 1.500v4M10.500 1.500v4" /></svg>
        <span className="ml-[6px] whitespace-nowrap leading-none tracking-[0.700px]">레이아웃</span>
      </div>
    </div>
  );
}
